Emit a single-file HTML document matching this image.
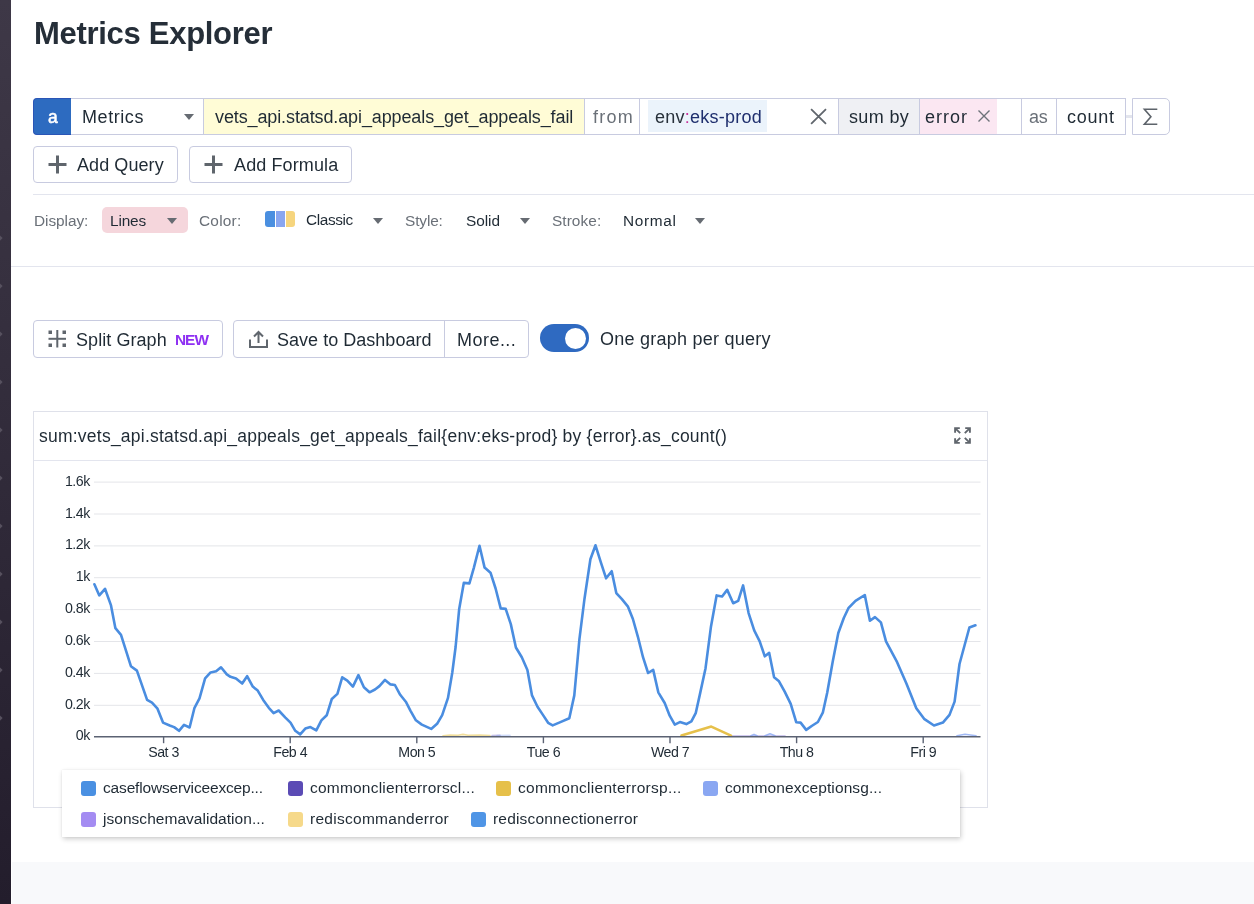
<!DOCTYPE html>
<html><head><meta charset="utf-8">
<style>
*{box-sizing:border-box;margin:0;padding:0}
html,body{width:1254px;height:904px;overflow:hidden;background:#fff;font-family:"Liberation Sans",sans-serif;color:#28313b}
.abs{position:absolute}
#side{position:absolute;left:0;top:0;width:11px;height:904px;background:linear-gradient(#3e3847,#342e3d 40%,#231d2c)}
#side i{position:absolute;left:-2.2px;width:3.6px;height:3.6px;margin-top:0.5px;background:#57515f;transform:rotate(45deg)}
#bottom{position:absolute;left:12px;top:862px;width:1242px;height:42px;background:#f8f9fb}
.t{position:absolute;white-space:nowrap;line-height:1;will-change:transform}
.box{position:absolute;border:1px solid #c8cbe0}
.caret{position:absolute;width:0;height:0;border-left:5.5px solid transparent;border-right:5.5px solid transparent;border-top:6.5px solid #666b72}
</style></head><body>
<div id="side"><i style="top:235.1px"></i><i style="top:283.1px"></i><i style="top:331.1px"></i><i style="top:379.1px"></i><i style="top:427.1px"></i><i style="top:475.1px"></i><i style="top:523.1px"></i><i style="top:571.1px"></i><i style="top:619.1px"></i><i style="top:667.1px"></i><i style="top:715.1px"></i></div>
<div id="bottom"></div>
<div class="t" id="title" style="left:33.80px;top:17.56px;font-size:31px;color:#252e38;font-weight:bold;letter-spacing:-0.293px">Metrics Explorer</div>
<div class="abs" style="left:33px;top:98px;width:38px;height:37px;background:#2d6bc0;border:1px solid #2a55b6;border-right:none;border-radius:4px 0 0 4px"></div>
<div class="t" id="a" style="left:47.50px;top:109.19px;font-size:17.5px;color:#ffffff"><span style="-webkit-text-stroke:0.5px #fff">a</span></div>
<div class="box" style="left:71px;top:98px;width:1055px;height:37px;border-left:none"></div>
<div class="t" id="metrics" style="left:82.10px;top:107.66px;font-size:18px;color:#1f2a34;letter-spacing:0.567px">Metrics</div>
<div class="caret" style="left:183.5px;top:114px"></div>
<div class="abs" style="left:203px;top:99px;width:382px;height:35px;background:#fffcd6;border-left:1px solid #c8cbe0;border-right:1px solid #c8cbe0"></div>
<div class="t" id="metric" style="left:215.40px;top:107.66px;font-size:18px;color:#1f2a34;letter-spacing:-0.116px">vets_api.statsd.api_appeals_get_appeals_fail</div>
<div class="t" id="from" style="left:592.90px;top:107.66px;font-size:18px;color:#6a7078;letter-spacing:1.267px">from</div>
<div class="abs" style="left:639px;top:99px;width:1px;height:35px;background:#c8cbe0"></div>
<div class="abs" style="left:648px;top:100px;width:119px;height:32px;background:#ebf3fb"></div>
<div class="t" id="env" style="left:654.80px;top:108.46px;font-size:18px;color:#1f2f6e;letter-spacing:0.236px"><span style="color:#28313b">env</span><span style="color:#c8339b">:</span>eks-prod</div>
<svg class="abs" style="left:809px;top:107px" width="20" height="20" viewBox="0 0 20 20"><path d="M2.1 2.2L17 16.9M17 2.2L2.1 16.9" stroke="#60666d" stroke-width="1.8"/></svg>
<div class="abs" style="left:838px;top:99px;width:82px;height:35px;background:#eff0f4;border-left:1px solid #c8cbe0;border-right:1px solid #c8cbe0"></div>
<div class="t" id="sumby" style="left:849.00px;top:107.66px;font-size:18px;color:#1f2a34;letter-spacing:0.360px">sum by</div>
<div class="abs" style="left:920px;top:99px;width:77px;height:35px;background:#fbe7f2"></div>
<div class="t" id="error" style="left:924.50px;top:108.46px;font-size:18px;color:#1f2a34;letter-spacing:1.000px">error</div>
<svg class="abs" style="left:977px;top:109px" width="14" height="14" viewBox="0 0 14 14"><path d="M1.5 1.5L12.5 12.5M12.5 1.5L1.5 12.5" stroke="#6d7279" stroke-width="1.4"/></svg>
<div class="abs" style="left:1021px;top:99px;width:1px;height:35px;background:#c8cbe0"></div>
<div class="t" id="as" style="left:1029.10px;top:107.66px;font-size:18px;color:#6a7078;letter-spacing:-0.200px">as</div>
<div class="abs" style="left:1056px;top:99px;width:1px;height:35px;background:#c8cbe0"></div>
<div class="t" id="count" style="left:1066.60px;top:107.66px;font-size:18px;color:#1f2a34;letter-spacing:0.750px">count</div>
<div class="abs" style="left:1126px;top:114.5px;width:7px;height:3px;background:#e3e5ed"></div>
<div class="box" style="left:1132px;top:98px;width:38px;height:37px;border-radius:0 5px 5px 0"></div>
<svg class="abs" style="left:1140px;top:105px" width="20" height="24" viewBox="0 0 20 24"><path d="M17.3 4.2H4.4L10.9 11.7L4.4 19.2H17.3" stroke="#5d636a" stroke-width="1.6" fill="none" stroke-linejoin="miter"/></svg>
<div class="box" style="left:33px;top:146px;width:145px;height:37px;border-radius:4px"></div>
<svg class="abs" style="left:48px;top:155px" width="19" height="19" viewBox="0 0 19 19"><path d="M9.5 0.5V18.5M0.5 9.5H18.5" stroke="#5f656c" stroke-width="3"/></svg>
<div class="t" id="addq" style="left:77.10px;top:155.56px;font-size:18px;color:#1f2a34;letter-spacing:0.075px">Add Query</div>
<div class="box" style="left:189px;top:146px;width:163px;height:37px;border-radius:4px"></div>
<svg class="abs" style="left:204px;top:155px" width="19" height="19" viewBox="0 0 19 19"><path d="M9.5 0.5V18.5M0.5 9.5H18.5" stroke="#5f656c" stroke-width="3"/></svg>
<div class="t" id="addf" style="left:233.80px;top:155.56px;font-size:18px;color:#1f2a34;letter-spacing:0.120px">Add Formula</div>
<div class="abs" style="left:33px;top:194px;width:1221px;height:1px;background:#e3e5ee"></div>
<div class="t" id="display" style="left:34.00px;top:212.76px;font-size:15.4px;color:#6a7078;letter-spacing:-0.057px">Display:</div>
<div class="abs" style="left:102px;top:207px;width:86px;height:26px;background:#f5d6dc;border-radius:5px"></div>
<div class="t" id="lines" style="left:110.20px;top:212.76px;font-size:15.4px;color:#1f2a34;letter-spacing:-0.150px">Lines</div>
<div class="caret" style="left:166.5px;top:217.5px"></div>
<div class="t" id="color" style="left:198.70px;top:212.76px;font-size:15.4px;color:#6a7078;letter-spacing:0.240px">Color:</div>
<div class="abs" style="left:265px;top:211px;width:30px;height:16px;border-radius:3px;overflow:hidden;display:flex"><div style="width:9.5px;background:#4a8fe0"></div><div style="width:1px;background:#fff"></div><div style="width:9px;background:#89a6f0"></div><div style="width:1px;background:#fff"></div><div style="width:9.5px;background:#f6d57e"></div></div>
<div class="t" id="classic" style="left:306.30px;top:211.86px;font-size:15.4px;color:#1f2a34;letter-spacing:-0.400px">Classic</div>
<div class="caret" style="left:372.5px;top:217.5px"></div>
<div class="t" id="style" style="left:404.70px;top:212.76px;font-size:15.4px;color:#6a7078;letter-spacing:-0.120px">Style:</div>
<div class="t" id="solid" style="left:465.80px;top:212.76px;font-size:15.4px;color:#1f2a34;letter-spacing:-0.050px">Solid</div>
<div class="caret" style="left:519.5px;top:217.5px"></div>
<div class="t" id="stroke" style="left:551.50px;top:212.76px;font-size:15.4px;color:#6a7078;letter-spacing:0.067px">Stroke:</div>
<div class="t" id="normal" style="left:622.60px;top:212.76px;font-size:15.4px;color:#1f2a34;letter-spacing:0.680px">Normal</div>
<div class="caret" style="left:694.5px;top:217.5px"></div>
<div class="abs" style="left:11px;top:266px;width:1243px;height:1px;background:#e3e5ee"></div>
<div class="box" style="left:33px;top:320px;width:190px;height:38px;border-radius:4px"></div>
<svg class="abs" style="left:48px;top:330px" width="19" height="18" viewBox="0 0 19 18"><g fill="#60666d"><rect x="0.5" y="0.5" width="3.5" height="3.5"/><rect x="14.5" y="0.5" width="3.5" height="3.5"/><rect x="0.5" y="13.5" width="3.5" height="3.5"/><rect x="14.5" y="13.5" width="3.5" height="3.5"/><rect x="8.3" y="0" width="2" height="17.5"/><rect x="0.5" y="7.8" width="17.5" height="2"/></g></svg>
<div class="t" id="split" style="left:76.20px;top:330.56px;font-size:18px;color:#1f2a34;letter-spacing:0.060px">Split Graph</div>
<div class="t" id="new" style="left:174.50px;top:332.06px;font-size:15.4px;color:#8e30f2;font-weight:bold;letter-spacing:-1.000px">NEW</div>
<div class="box" style="left:233px;top:320px;width:296px;height:38px;border-radius:4px"></div>
<div class="abs" style="left:444px;top:321px;width:1px;height:36px;background:#c8cbe0"></div>
<svg class="abs" style="left:249px;top:330px" width="19" height="18" viewBox="0 0 19 18"><path d="M1 9.5V17H18V9.5M9.5 13V2.2M5 6.5L9.5 2L14 6.5" stroke="#60666d" stroke-width="2" fill="none"/></svg>
<div class="t" id="save" style="left:277.00px;top:330.56px;font-size:18px;color:#1f2a34;letter-spacing:0.025px">Save to Dashboard</div>
<div class="t" id="more" style="left:457.40px;top:330.56px;font-size:18px;color:#1f2a34;letter-spacing:0.467px">More...</div>
<div class="abs" style="left:540px;top:324px;width:49px;height:28px;border-radius:14px;background:#2f6ac1"></div>
<div class="abs" style="left:565px;top:327.5px;width:21px;height:21px;border-radius:50%;background:#fff"></div>
<div class="t" id="onegraph" style="left:599.60px;top:329.76px;font-size:18px;color:#1f2a34;letter-spacing:0.244px">One graph per query</div>
<div class="box" style="left:33px;top:411px;width:955px;height:397px;border-color:#dfe1ea"></div>
<div class="abs" style="left:34px;top:460px;width:953px;height:1px;background:#e3e5ee"></div>
<div class="t" id="gtitle" style="left:38.80px;top:427.59px;font-size:17.5px;color:#1f2a34;letter-spacing:0.234px">sum:vets_api.statsd.api_appeals_get_appeals_fail{env:eks-prod} by {error}.as_count()</div>
<svg class="abs" style="left:953px;top:426px" width="19" height="19" viewBox="0 0 19 19"><g stroke="#60666d" stroke-width="1.9" fill="none"><path d="M2.1 6.8V2.1H6.8M2.1 2.1L7.2 7.2"/><path d="M12.2 2.1H16.9V6.8M16.9 2.1L11.8 7.2"/><path d="M2.1 12.2V16.9H6.8M2.1 16.9L7.2 11.8"/><path d="M12.2 16.9H16.9V12.2M16.9 16.9L11.8 11.8"/></g></svg>
<svg id="chart" class="abs" style="left:0;top:0" width="1254" height="904" font-family="Liberation Sans, sans-serif" font-size="14.2" letter-spacing="-0.5" fill="#1f2a34">
<line x1="94" y1="482.1" x2="980.5" y2="482.1" stroke="#e4e5e9" stroke-width="1"/>
<line x1="94" y1="514.0" x2="980.5" y2="514.0" stroke="#e4e5e9" stroke-width="1"/>
<line x1="94" y1="545.9" x2="980.5" y2="545.9" stroke="#e4e5e9" stroke-width="1"/>
<line x1="94" y1="577.7" x2="980.5" y2="577.7" stroke="#e4e5e9" stroke-width="1"/>
<line x1="94" y1="609.6" x2="980.5" y2="609.6" stroke="#e4e5e9" stroke-width="1"/>
<line x1="94" y1="641.5" x2="980.5" y2="641.5" stroke="#e4e5e9" stroke-width="1"/>
<line x1="94" y1="673.4" x2="980.5" y2="673.4" stroke="#e4e5e9" stroke-width="1"/>
<line x1="94" y1="705.3" x2="980.5" y2="705.3" stroke="#e4e5e9" stroke-width="1"/>
<text x="89.8" y="485.6" text-anchor="end">1.6k</text>
<text x="89.8" y="517.5" text-anchor="end">1.4k</text>
<text x="89.8" y="549.4" text-anchor="end">1.2k</text>
<text x="89.8" y="581.2" text-anchor="end">1k</text>
<text x="89.8" y="613.1" text-anchor="end">0.8k</text>
<text x="89.8" y="645.0" text-anchor="end">0.6k</text>
<text x="89.8" y="676.9" text-anchor="end">0.4k</text>
<text x="89.8" y="708.8" text-anchor="end">0.2k</text>
<text x="89.8" y="740.2" text-anchor="end">0k</text>
<line x1="163.6" y1="736.7" x2="163.6" y2="743.2" stroke="#5b6273" stroke-width="1.4"/>
<text x="163.6" y="756.9" text-anchor="middle">Sat 3</text>
<line x1="290.2" y1="736.7" x2="290.2" y2="743.2" stroke="#5b6273" stroke-width="1.4"/>
<text x="290.2" y="756.9" text-anchor="middle">Feb 4</text>
<line x1="416.8" y1="736.7" x2="416.8" y2="743.2" stroke="#5b6273" stroke-width="1.4"/>
<text x="416.8" y="756.9" text-anchor="middle">Mon 5</text>
<line x1="543.4" y1="736.7" x2="543.4" y2="743.2" stroke="#5b6273" stroke-width="1.4"/>
<text x="543.4" y="756.9" text-anchor="middle">Tue 6</text>
<line x1="670.0" y1="736.7" x2="670.0" y2="743.2" stroke="#5b6273" stroke-width="1.4"/>
<text x="670.0" y="756.9" text-anchor="middle">Wed 7</text>
<line x1="796.6" y1="736.7" x2="796.6" y2="743.2" stroke="#5b6273" stroke-width="1.4"/>
<text x="796.6" y="756.9" text-anchor="middle">Thu 8</text>
<line x1="923.2" y1="736.7" x2="923.2" y2="743.2" stroke="#5b6273" stroke-width="1.4"/>
<text x="923.2" y="756.9" text-anchor="middle">Fri 9</text>
<g fill="none" stroke-width="1.6" stroke-linejoin="round" stroke-linecap="round">
<path d="M443 735.8 L450 735.1 L458 735.2 L463 734.4 L468 735.2 L480 735.1 L490 735.6" stroke="#e9c95a" opacity="0.6"/>
<path d="M492 735.6 L500 735.4" stroke="#6a5cc0" opacity="0.4"/>
<path d="M497 735.6 L510 735.4" stroke="#8aa7f2" opacity="0.4"/>
<path d="M731 735.8 L785 735.8" stroke="#7a68d0" opacity="0.35"/>
<path d="M751 735.8 L754 734.4 L757 735.8 M765 735.8 L770 733.8 L775 735.8 M957 735.8 L965 734.2 L976 735.8" stroke="#8aa7f2" opacity="0.8"/>
<path d="M681.5 735.6 L711.3 726.6 L731 735.6" stroke="#e6c04a" stroke-width="2.6"/>
</g>

<path d="M94.4 584.3 L99.3 595.4 L105.0 588.8 L111.0 605.4 L115.4 628.2 L121.0 634.8 L130.9 666.2 L136.9 670.6 L147.1 699.9 L152.0 702.7 L157.5 708.7 L163.0 722.6 L169.7 725.5 L174.1 727.1 L179.0 730.8 L184.0 724.9 L189.6 727.5 L194.5 707.8 L199.5 698.3 L205.1 678.4 L210.6 672.4 L216.1 671.3 L221.0 667.3 L226.8 674.4 L230.5 676.8 L236.0 678.4 L242.2 683.5 L247.1 676.2 L252.8 686.6 L257.7 690.6 L263.2 699.9 L268.8 707.8 L273.6 713.1 L278.7 710.5 L285.4 717.6 L290.5 722.6 L295.3 730.8 L300.2 734.4 L305.3 728.6 L310.4 727.1 L316.3 730.4 L321.4 720.4 L326.7 715.3 L331.8 699.0 L337.4 693.9 L342.2 677.3 L347.3 680.6 L352.9 686.6 L358.4 675.1 L363.9 687.2 L369.5 692.3 L375.0 689.5 L379.4 686.1 L385.0 679.9 L390.5 684.4 L394.9 685.0 L400.2 694.8 L405.8 701.7 L410.4 710.6 L415.9 720.3 L421.8 724.6 L431.2 728.9 L437.1 723.8 L442.2 715.2 L448.0 697.9 L452.3 672.5 L455.6 647.0 L459.2 608.9 L463.8 582.9 L469.4 583.4 L473.9 567.6 L479.5 545.8 L484.6 567.6 L490.5 572.7 L495.6 588.5 L500.7 608.4 L505.7 608.9 L510.8 624.1 L515.9 647.5 L521.8 657.2 L527.4 669.9 L532.0 695.4 L537.5 706.8 L542.6 714.4 L548.1 722.8 L552.7 725.4 L560.4 722.1 L569.3 718.2 L574.3 695.4 L579.4 639.4 L584.5 598.7 L590.4 559.3 L595.5 545.3 L601.1 563.1 L606.1 578.3 L611.7 571.2 L616.3 593.1 L621.9 599.2 L627.8 606.3 L632.9 619.0 L637.9 636.8 L643.0 657.2 L648.1 673.0 L653.2 669.9 L658.3 692.3 L664.7 703.0 L669.7 715.7 L674.8 724.6 L679.9 722.1 L686.3 724.1 L691.4 721.3 L695.7 713.2 L700.0 693.9 L705.5 668.4 L711.0 626.4 L716.6 595.4 L722.1 596.5 L727.2 589.9 L733.2 603.2 L738.2 600.9 L743.1 585.4 L748.6 613.1 L754.2 630.4 L759.7 641.4 L764.8 656.3 L769.2 652.9 L774.1 677.3 L779.0 681.3 L784.7 691.7 L790.7 703.8 L796.2 722.2 L800.6 722.6 L806.2 729.9 L811.7 726.0 L817.9 722.0 L822.8 712.7 L827.2 692.8 L832.7 661.8 L838.3 633.0 L843.8 618.0 L848.4 608.2 L855.5 600.9 L864.8 595.0 L869.9 620.8 L875.0 617.1 L880.9 622.4 L886.0 641.4 L897.1 662.2 L906.4 683.5 L916.3 708.2 L924.1 718.8 L934.0 725.5 L942.9 722.6 L949.5 714.9 L954.6 701.6 L959.5 664.0 L969.4 627.5 L975.4 625.3" stroke="#4a8de0" stroke-width="2.6" fill="none" stroke-linejoin="round" stroke-linecap="round"/>
<line x1="94" y1="736.7" x2="980.5" y2="736.7" stroke="#5b6273" stroke-width="1.6"/>
</svg>
<div class="abs" id="legend" style="left:62px;top:770px;width:898px;height:67px;background:#fff;box-shadow:0 0 1px rgba(0,0,0,0.12),1px 2px 5px rgba(0,0,0,0.2)"></div>
<div class="abs" style="left:81px;top:781px;width:14.5px;height:15px;border-radius:3px;background:#4a90e2"></div>
<div class="t" id="leg0" style="left:102.60px;top:779.68px;font-size:15.5px;color:#1f2a34;letter-spacing:-0.164px">caseflowserviceexcep...</div>
<div class="abs" style="left:288px;top:781px;width:14.5px;height:15px;border-radius:3px;background:#5b4bb5"></div>
<div class="t" id="leg1" style="left:310.40px;top:779.68px;font-size:15.5px;color:#1f2a34;letter-spacing:0.209px">commonclienterrorscl...</div>
<div class="abs" style="left:496px;top:781px;width:14.5px;height:15px;border-radius:3px;background:#e6c04a"></div>
<div class="t" id="leg2" style="left:517.90px;top:779.68px;font-size:15.5px;color:#1f2a34;letter-spacing:0.276px">commonclienterrorsp...</div>
<div class="abs" style="left:703px;top:781px;width:14.5px;height:15px;border-radius:3px;background:#8aa7f2"></div>
<div class="t" id="leg3" style="left:725.40px;top:779.68px;font-size:15.5px;color:#1f2a34;letter-spacing:0.105px">commonexceptionsg...</div>
<div class="abs" style="left:81px;top:812px;width:14.5px;height:15px;border-radius:3px;background:#a48cf2"></div>
<div class="t" id="leg4" style="left:103.00px;top:810.68px;font-size:15.5px;color:#1f2a34;letter-spacing:0.036px">jsonschemavalidation...</div>
<div class="abs" style="left:288px;top:812px;width:14.5px;height:15px;border-radius:3px;background:#f6d98a"></div>
<div class="t" id="leg5" style="left:310.40px;top:810.68px;font-size:15.5px;color:#1f2a34;letter-spacing:0.275px">rediscommanderror</div>
<div class="abs" style="left:471px;top:812px;width:14.5px;height:15px;border-radius:3px;background:#4f95e6"></div>
<div class="t" id="leg6" style="left:493.00px;top:810.68px;font-size:15.5px;color:#1f2a34;letter-spacing:0.189px">redisconnectionerror</div>
</body></html>
